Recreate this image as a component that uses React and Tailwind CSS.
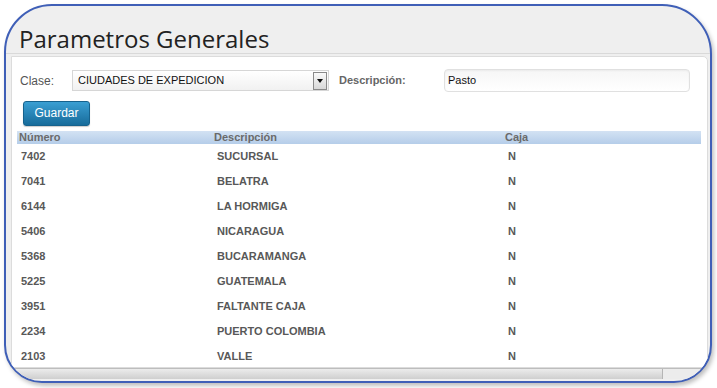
const ROWS = [
  { num: '7402', desc: 'SUCURSAL', caja: 'N' },
  { num: '7041', desc: 'BELATRA', caja: 'N' },
  { num: '6144', desc: 'LA HORMIGA', caja: 'N' },
  { num: '5406', desc: 'NICARAGUA', caja: 'N' },
  { num: '5368', desc: 'BUCARAMANGA', caja: 'N' },
  { num: '5225', desc: 'GUATEMALA', caja: 'N' },
  { num: '3951', desc: 'FALTANTE CAJA', caja: 'N' },
  { num: '2234', desc: 'PUERTO COLOMBIA', caja: 'N' },
  { num: '2103', desc: 'VALLE', caja: 'N' },
]

const ARIAL = { fontFamily: '"Liberation Sans", Arial, sans-serif' }

export default function App() {
  return (
    <div className="w-[717px] h-[388px] bg-white pt-[4px] pl-[4px]" style={ARIAL}>
      <div className="w-[708px] h-[379px] border-2 border-[#3f5fb7] rounded-tl-[48px] rounded-tr-[50px] rounded-bl-[38px] rounded-br-[38px] overflow-hidden bg-[#efefef] flex flex-col shadow-[2px_3px_4px_rgba(0,0,0,0.25)]">
        {/* Title */}
        <div className="h-[48px] shrink-0 pl-[13px] pt-[21px] border-b border-[#d9d9d9]">
          <h1
            className="text-[24px] leading-none text-[#222]"
            style={{ fontFamily: '"Open Sans", "Noto Sans", sans-serif' }}
          >
            Parametros Generales
          </h1>
        </div>

        {/* Panel */}
        <div className="flex-1 mt-[2px] ml-[5px] mr-[2px] bg-white border border-[#dcdcdc] rounded-tr-[5px] overflow-hidden min-h-0">
          {/* Form row */}
          <div className="flex items-center h-[23px] mt-[12px] pl-[8px]">
            <span className="w-[52px] text-[12px] text-[#555]">Clase:</span>
            <div className="w-[257px] h-[21px] border border-[#d6d6d6] bg-gradient-to-b from-white to-[#f1f1f1] flex items-center pl-[5px] pr-[1px]">
              <span className="flex-1 text-[11px] text-[#111]">CIUDADES DE EXPEDICION</span>
              <div className="w-[14px] h-[18px] border border-[#8a8a8a] bg-gradient-to-b from-[#fafafa] to-[#d8d8d8] flex items-center justify-center">
                <div className="w-0 h-0 border-l-[3px] border-r-[3px] border-t-[4px] border-l-transparent border-r-transparent border-t-[#111]" />
              </div>
            </div>
            <span className="ml-[10px] w-[105px] text-[11px] font-bold text-[#666]">Descripción:</span>
            <div className="w-[246px] h-[23px] rounded-[4px] border border-[#e0e0e0] bg-gradient-to-b from-[#f6f6f6] to-white shadow-[inset_0_1px_2px_rgba(0,0,0,0.05)] flex items-center pl-[3px]">
              <span className="text-[11px] text-[#111]">Pasto</span>
            </div>
          </div>

          {/* Button */}
          <div className="pl-[11px] mt-[8px]">
            <button className="w-[67px] h-[25px] rounded-[3px] border border-[#16628d] bg-gradient-to-b from-[#3a9fd3] to-[#176c9b] text-white text-[12px] shadow-[0_1px_1px_rgba(0,0,0,0.2)]">
              Guardar
            </button>
          </div>

          {/* Table */}
          <div className="ml-[5px] mr-[6px] mt-[5px]">
            <div className="grid grid-cols-[197px_291px_1fr] h-[13px] items-center bg-gradient-to-b from-[#d3e2f3] to-[#b5cde9] text-[11px] font-bold text-[#6a6a6a] leading-none">
              <span className="pl-[2px]">Número</span>
              <span>Descripción</span>
              <span>Caja</span>
            </div>
            {ROWS.map(r => (
              <div key={r.num} className="grid grid-cols-[197px_291px_1fr] h-[25px] items-center text-[11px] font-bold text-[#585858]">
                <span className="pl-[4px]">{r.num}</span>
                <span className="pl-[3px]">{r.desc}</span>
                <span className="pl-[3px]">{r.caja}</span>
              </div>
            ))}
          </div>
        </div>

        {/* Bottom scrollbar */}
        <div className="h-[11px] shrink-0 ml-[5px] mr-[2px] flex border-t border-[#bdbdbd]">
          <div className="w-[652px] bg-gradient-to-b from-[#ececec] to-[#cfcfcf] border-r border-[#b5b5b5]" />
          <div className="flex-1 bg-[#ececec]" />
        </div>
        <div className="h-[2px] shrink-0" />
      </div>
    </div>
  )
}
